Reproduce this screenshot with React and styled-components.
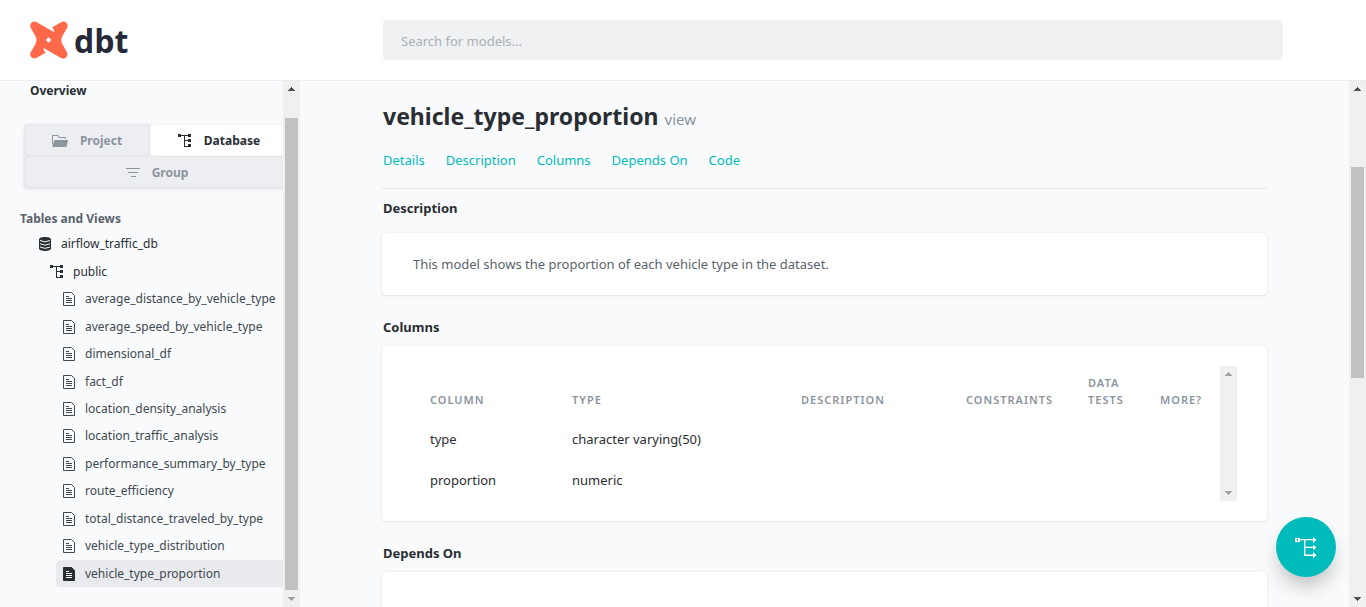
import React from "react";
import styled, { createGlobalStyle, css } from "styled-components";

const Global = createGlobalStyle`
  *, *::before, *::after { box-sizing: border-box; }
  html, body, #root { height: 100%; }
  body {
    margin: 0;
    overflow: hidden;
    background: #f9fafc;
    color: #292e33;
    font-family: "Segoe UI", "Noto Sans", "Open Sans", sans-serif;
    font-size: 13px;
    line-height: 20px;
  }
  a { color: inherit; text-decoration: none; }
  h1, h2, p, ul, nav { margin: 0; padding: 0; }
  ul { list-style: none; }
  svg { display: block; flex: none; }
`;

const Page = styled.div`
  display: flex;
  flex-direction: column;
  height: 100%;
`;

const Header = styled.header`
  display: flex;
  flex: none;
  align-items: center;
  height: 81px;
  padding: 0 83px 0 29px;
  background: #fff;
  border-bottom: 1px solid #eaecef;
`;

const Brand = styled.a`
  display: flex;
  flex: none;
  align-items: center;
  gap: 5px;
  width: 354px;
`;

const Wordmark = styled.span`
  padding-top: 1px;
  color: #262a38;
  font-family: "Open Sans", "Noto Sans", sans-serif;
  font-size: 32px;
  font-weight: 700;
  line-height: 40px;
`;

const Search = styled.input`
  flex: 1;
  min-width: 0;
  height: 40px;
  padding: 2px 18px 0;
  border: 0;
  border-radius: 4px;
  background: #f0f1f3;
  color: #292e33;
  font: inherit;
  &::placeholder { color: #a9b0b7; opacity: 1; }
`;

const Body = styled.div`
  display: flex;
  flex: 1;
  min-height: 0;
`;

const Sidebar = styled.aside`
  display: flex;
  flex: none;
  width: 300px;
`;

const SidebarContent = styled.div`
  flex: 1;
  min-width: 0;
  overflow: hidden;
  font-size: 12px;
`;

const Overview = styled.a`
  display: block;
  padding: 0 30px;
  font-weight: 700;
  line-height: 20px;
`;

const Switch = styled.div`
  display: flex;
  flex-wrap: wrap;
  width: 276px;
  margin: 23px 0 0 24px;
  border-radius: 4px;
  background: #edeef2;
  box-shadow: 0 1px 3px rgba(40, 50, 60, 0.14);
`;

const SwitchButton = styled.button`
  display: flex;
  flex: 1 0 ${(p) => p.$basis};
  align-items: center;
  justify-content: center;
  gap: 12px;
  height: 32px;
  padding: 2px ${(p) => p.$end || "0"} 0 0;
  border: 0;
  border-radius: 4px;
  background: transparent;
  box-shadow: inset 0 0 2px rgba(40, 50, 60, 0.12);
  color: #8b959e;
  font: inherit;
  font-weight: 700;
  ${(p) =>
    p.$active &&
    css`
      background: #fff;
      color: #292e33;
    `}
`;

const TreeTitle = styled.h2`
  padding: 0 20px;
  margin: 21px 0 0;
  color: #5a636b;
  font-size: 12px;
  font-weight: 700;
  line-height: 20px;
`;

const Tree = styled.ul`
  display: grid;
  grid-auto-rows: 1fr;
`;

const Models = styled(Tree)`
  min-height: 302px;
`;

const Node = styled.a`
  display: flex;
  align-items: center;
  gap: ${(p) => p.$gap || "10px"};
  height: 100%;
  min-height: ${(p) => (p.$branch ? "28px" : "27px")};
  margin-left: ${(p) => p.$indent};
  padding: 1px 0 0 7px;
  border-radius: 4px 0 0 4px;
  color: ${(p) => (p.$branch ? "#292e33" : "#404950")};
  background: ${(p) => (p.$active ? "#e9eaee" : "transparent")};
  white-space: nowrap;
`;

const Main = styled.main`
  flex: 1;
  min-width: 0;
  overflow: hidden;
  padding: 22px 82px 0;
`;

const Title = styled.h1`
  padding-left: 1px;
  font-size: 23px;
  font-weight: 700;
  line-height: 26px;
`;

const Kind = styled.small`
  color: #8b959e;
  font-size: 15px;
  font-weight: 400;
`;

const Jumps = styled.nav`
  display: flex;
  gap: 21px;
  padding: 18px 1px;
  border-bottom: 1px solid #e6e8eb;
  color: #00bbbb;
`;

const SectionTitle = styled.h2`
  padding-left: 1px;
  margin: ${(p) => p.$top} 0 ${(p) => p.$bottom};
  font-size: 13px;
  font-weight: 700;
  line-height: 20px;
`;

const Card = styled.section`
  padding: 20px 30px;
  border-radius: 4px;
  background: #fff;
  box-shadow: 0 0 2px rgba(40, 50, 60, 0.1), 0 1px 2px rgba(40, 50, 60, 0.08);
  color: #5a636b;
`;

const Prose = styled.p`
  padding: 1px;
`;

const TableScroll = styled.div`
  display: flex;
  color: #292e33;
`;

const Table = styled.table`
  flex: 1;
  min-width: 0;
  table-layout: fixed;
  border-collapse: collapse;
  text-align: left;
`;

const Col = styled.col`
  width: ${(p) => p.$w};
`;

const Th = styled.th`
  height: 53px;
  padding: 8px 16px 11px 18px;
  color: #8b959e;
  font-size: 11px;
  font-weight: 600;
  letter-spacing: 1px;
  line-height: 17px;
  text-transform: uppercase;
  vertical-align: bottom;
`;

const Td = styled.td`
  height: 41px;
  padding: 0 0 1px 18px;
`;

const Bar = styled.div`
  display: flex;
  flex: none;
  flex-direction: column;
  align-items: center;
  width: 17px;
  background: #f0f0f0;
`;

const Track = styled.div`
  display: flex;
  flex: 1;
  flex-direction: column;
  align-items: center;
  width: 100%;
`;

const Space = styled.div`
  flex: ${(p) => p.$share};
`;

const Thumb = styled.div`
  flex: ${(p) => p.$share};
  width: 13px;
  background: #c1c1c1;
`;

const Fab = styled.button`
  position: fixed;
  right: 30px;
  bottom: 30px;
  display: grid;
  place-items: center;
  width: 60px;
  height: 60px;
  padding: 2px 0 0;
  border: 0;
  border-radius: 50%;
  background: #00bbbb;
  box-shadow: 0 12px 20px -4px rgba(0, 0, 0, 0.25);
`;

const Arrow = ({ down, color }) => (
  <svg width="17" height="17" viewBox="0 0 17 17" fill={color} shapeRendering="crispEdges" aria-hidden="true">
    <path d={down ? "M5 7h7v1h-1v1h-1v1h-1v1h-1v-1h-1v-1h-1v-1h-1z" : "M8 6h1v1h1v1h1v1h1v1h-7v-1h1v-1h1v-1h1z"} />
  </svg>
);

const Scrollbar = ({ up = "#505050", down = "#505050", before, thumb, after }) => (
  <Bar aria-hidden="true">
    <Arrow color={up} />
    <Track>
      {thumb && (
        <>
          <Space $share={before} />
          <Thumb $share={thumb} />
          <Space $share={after} />
        </>
      )}
    </Track>
    <Arrow down color={down} />
  </Bar>
);

const Logo = () => (
  <svg width="40" height="40" viewBox="0 0 40 40" aria-hidden="true">
    <path
      fill="#ff694a"
      fillRule="evenodd"
      d="M7.8 2.2L24.4 11.8Q25.6 12 25.2 10.4Q24.8 8.6 23 7.4L32 2.2C36.2 0 40.2 4 38 8L33.4 16Q31.2 20 33.4 24.2L37.8 32C40 36 36 40.2 32 38L15.4 28.4Q14.2 28 14.6 29.6Q15 31.4 16.8 32.6L7.8 37.8C3.8 40 -.4 36 1.8 32L6.4 24.2Q8.6 20 6.4 16L1.8 8C-.4 4 3.8 0 7.8 2.2zM19.2 17.6L17.2 19.6Q16.8 20 17.2 20.4L19.2 22.4Q19.6 22.8 20 22.4L22 20.4Q22.4 20 22 19.6L20 17.6Q19.6 17.2 19.2 17.6z"
    />
  </svg>
);

const FolderIcon = () => (
  <svg width="16" height="12" viewBox="0 0 16 12" fill="#8b959e" aria-hidden="true">
    <path d="M0 1Q0 0 1 0H6L7.5 2H13Q14 2 14 3V4H13V3H7L5.5 1H1V8L0 11z" />
    <path d="M3.2 5H16L14.8 11Q14.6 12 13.6 12H1Q.2 12 .5 11.2L2 6Q2.3 5 3.2 5z" />
  </svg>
);

const TreeIcon = () => (
  <svg width="14" height="14" viewBox="0 0 14 14" fill="#292e33" shapeRendering="crispEdges" aria-hidden="true">
    <path d="M0 0h3v3h-3zM3 1h7v1h-7zM10 0h3v3h-3zM6 2h1v11h-1zM7 6h3v1h-3zM7 12h3v1h-3zM10 5h3v3h-3zM10 10h3v3h-3z" />
  </svg>
);

const GroupIcon = () => (
  <svg width="14" height="10" viewBox="0 0 14 10" fill="#8b959e" shapeRendering="crispEdges" aria-hidden="true">
    <path d="M0 0h14v1h-14zM2 4h10v1h-10zM5 8h5v1h-5z" />
  </svg>
);

const DatabaseIcon = () => (
  <svg width="12" height="14" viewBox="0 0 12 14" aria-hidden="true">
    <path fill="#292e33" d="M0 2.5C0-.8 12-.8 12 2.5V11.5C12 14.8 0 14.8 0 11.5z" />
    <path fill="none" stroke="#f9fafc" d="M1 3.5Q6 6.2 11 3.5M1 6.8Q6 9.5 11 6.8M1 10Q6 12.7 11 10" />
  </svg>
);

const FileIcon = ({ filled }) => (
  <svg width="12" height="14" viewBox="0 0 12 14" aria-hidden="true">
    <path d="M.5 .5H8.5L11.5 3.5V13.5H.5z" fill={filled ? "#292e33" : "none"} stroke={filled ? "#292e33" : "#404950"} />
    <path d="M3 4.5H6M3 6.5H9M3 8.5H9M3 10.5H9" stroke={filled ? "#fff" : "#404950"} fill="none" />
  </svg>
);

const LineageIcon = () => (
  <svg width="22" height="22" viewBox="0 0 22 22" fill="#fff" aria-hidden="true">
    <path fillRule="evenodd" d="M0 1h5v4H0zM2 2v2h1V2z" />
    <path d="M5 2H18V0L21.5 3L18 6V3.2H10.4V9.8H18V7.5L21.5 10.5L18 13.5V11H10.4V17.6H18V15L21.5 18.2L18 21.5V19H9V3.2H5z" />
  </svg>
);

const models = [
  "average_distance_by_vehicle_type",
  "average_speed_by_vehicle_type",
  "dimensional_df",
  "fact_df",
  "location_density_analysis",
  "location_traffic_analysis",
  "performance_summary_by_type",
  "route_efficiency",
  "total_distance_traveled_by_type",
  "vehicle_type_distribution",
  "vehicle_type_proportion",
];

const current = "vehicle_type_proportion";

const columns = [
  { name: "type", type: "character varying(50)" },
  { name: "proportion", type: "numeric" },
];

export default function App() {
  return (
    <Page>
      <Global />
      <Header>
        <Brand href="#overview" aria-label="dbt home">
          <Logo />
          <Wordmark>dbt</Wordmark>
        </Brand>
        <Search type="search" placeholder="Search for models..." aria-label="Search for models" />
      </Header>
      <Body>
        <Sidebar>
          <SidebarContent>
            <Overview href="#overview">Overview</Overview>
            <Switch>
              <SwitchButton type="button" $basis="126px">
                <FolderIcon />
                Project
              </SwitchButton>
              <SwitchButton type="button" $basis="150px" $end="12px" $active>
                <TreeIcon />
                Database
              </SwitchButton>
              <SwitchButton type="button" $basis="100%" $end="10px">
                <GroupIcon />
                Group
              </SwitchButton>
            </Switch>
            <TreeTitle>Tables and Views</TreeTitle>
            <Tree>
              <li>
                <Node href="#airflow_traffic_db" $indent="32px" $branch>
                  <DatabaseIcon />
                  airflow_traffic_db
                </Node>
              </li>
              <li>
                <Node href="#public" $indent="43px" $gap="9px" $branch>
                  <TreeIcon />
                  public
                </Node>
              </li>
            </Tree>
            <Models>
              {models.map((name) => (
                <li key={name}>
                  <Node href={`#${name}`} $indent="56px" $active={name === current}>
                    <FileIcon filled={name === current} />
                    {name}
                  </Node>
                </li>
              ))}
            </Models>
          </SidebarContent>
          <Scrollbar down="#a3a3a3" before={20} thumb={472} after={0} />
        </Sidebar>
        <Main>
          <Title>
            vehicle_type_proportion <Kind>view</Kind>
          </Title>
          <Jumps>
            <a href="#details">Details</a>
            <a href="#description">Description</a>
            <a href="#columns">Columns</a>
            <a href="#depends_on">Depends On</a>
            <a href="#code">Code</a>
          </Jumps>
          <SectionTitle $top="9px" $bottom="15px">Description</SectionTitle>
          <Card id="description">
            <Prose>This model shows the proportion of each vehicle type in the dataset.</Prose>
          </Card>
          <SectionTitle $top="22px" $bottom="9px">Columns</SectionTitle>
          <Card id="columns">
            <TableScroll>
              <Table>
                <colgroup>
                  <Col $w="142px" />
                  <Col />
                  <Col $w="165px" />
                  <Col $w="122px" />
                  <Col $w="72px" />
                  <Col $w="78px" />
                </colgroup>
                <thead>
                  <tr>
                    <Th scope="col">Column</Th>
                    <Th scope="col">Type</Th>
                    <Th scope="col">Description</Th>
                    <Th scope="col">Constraints</Th>
                    <Th scope="col">Data Tests</Th>
                    <Th scope="col">More?</Th>
                  </tr>
                </thead>
                <tbody>
                  {columns.map((c) => (
                    <tr key={c.name}>
                      <Td>{c.name}</Td>
                      <Td>{c.type}</Td>
                      <Td />
                      <Td />
                      <Td />
                      <Td />
                    </tr>
                  ))}
                </tbody>
              </Table>
              <Scrollbar up="#a3a3a3" down="#a3a3a3" />
            </TableScroll>
          </Card>
          <SectionTitle $top="22px" $bottom="9px">Depends On</SectionTitle>
          <Card id="depends_on">
            <Prose>&nbsp;</Prose>
          </Card>
        </Main>
        <Scrollbar before={69} thumb={211} after={212} />
      </Body>
      <Fab type="button" aria-label="View lineage graph">
        <LineageIcon />
      </Fab>
    </Page>
  );
}
